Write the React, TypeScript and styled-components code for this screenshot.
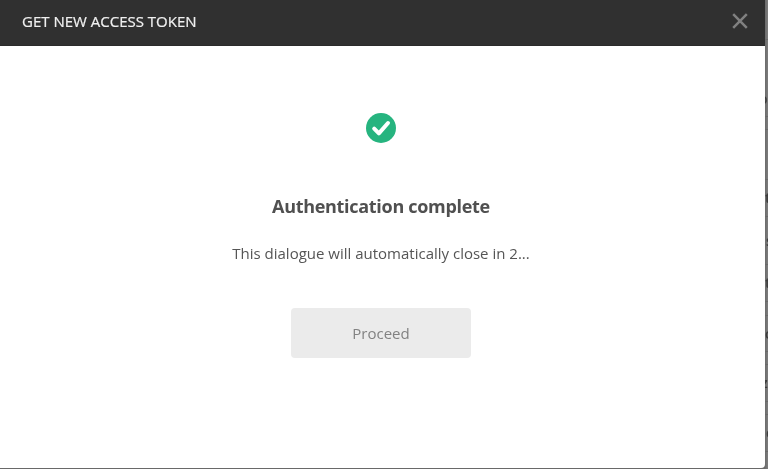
import styled, { createGlobalStyle } from "styled-components";

const GlobalStyle = createGlobalStyle`
  * { box-sizing: border-box; }
  html, body { margin: 0; padding: 0; overflow: hidden; }
  body { background: #6b6b6b; font-family: "Open Sans", "Noto Sans", sans-serif; }
`;

const Page = styled.div`
  display: flex;
  width: 768px;
  height: 469px;
  overflow: hidden;
  background: #696969;
`;

const Dialog = styled.section`
  display: flex;
  flex-direction: column;
  width: 765px;
  height: 468px;
  flex: none;
  background: #fff;
  border-radius: 0 0 4px 0;
  will-change: transform;
`;

const Header = styled.header`
  display: flex;
  align-items: center;
  justify-content: space-between;
  height: 46px;
  flex: none;
  padding: 0 17px 4px 22px;
  background: #303030;
  border-bottom: 1px solid #2b2b2b;
`;

const Title = styled.h1`
  margin: 0;
  font-size: 15px;
  line-height: 20px;
  font-weight: 400;
  color: #f0f0f0;
  -webkit-text-stroke: 0.2px #f0f0f0;
  white-space: nowrap;
`;

const CloseButton = styled.button`
  display: flex;
  padding: 0;
  border: 0;
  background: none;
  color: #808080;
`;

const Body = styled.main`
  display: flex;
  flex-direction: column;
  align-items: center;
  padding: 67px 3px 0 0;
`;

const StatusIcon = styled.svg`
  display: block;
  width: 30px;
  height: 30px;
`;

const Heading = styled.h2`
  margin: 51px 0 0;
  font-size: 18px;
  line-height: 24px;
  font-weight: 700;
  letter-spacing: -0.3px;
  color: #505050;
  white-space: nowrap;
`;

const Message = styled.p`
  margin: 25px 0 0;
  font-size: 15px;
  line-height: 20px;
  color: #555;
  white-space: nowrap;
`;

const ProceedButton = styled.button`
  width: 180px;
  height: 50px;
  margin-top: 45px;
  padding: 0;
  border: 0;
  border-radius: 4px;
  background: #ebebeb;
  color: #828282;
  font: 400 15px/20px "Open Sans", "Noto Sans", sans-serif;
`;

const Backdrop = styled.aside`
  width: 3px;
  height: 469px;
  flex: none;
  overflow: hidden;
  background: linear-gradient(90deg, #6c6c6c, #7d7d7d);
  will-change: transform;
`;

const BackdropRow = styled.div<{ $height: number; $shift: number; $line?: boolean }>`
  display: flex;
  align-items: center;
  height: ${(p) => p.$height}px;
  border-bottom: 1px solid ${(p) => (p.$line ? "#696969" : "transparent")};
  font-size: 14px;
  line-height: 16px;
  font-weight: 600;
  color: #3c3c3c;
  text-indent: ${(p) => p.$shift}px;
`;

const backdropRows = [
  { height: 40, text: "", shift: 0, line: true },
  { height: 41, text: "", shift: 0 },
  { height: 36, text: "o", shift: -6, line: true },
  { height: 13, text: "", shift: 0, line: true },
  { height: 50, text: "", shift: 0, line: true },
  { height: 37, text: "t", shift: 0, line: true },
  { height: 48, text: "s", shift: 1, line: true },
  { height: 37, text: "t", shift: 0, line: true },
  { height: 14, text: "", shift: 0, line: true },
  { height: 36, text: "c", shift: 0, line: true },
  { height: 13, text: "", shift: 0, line: true },
  { height: 37, text: "z", shift: -4, line: true },
  { height: 13, text: "", shift: 0, line: true },
  { height: 37, text: "e", shift: 1, line: true },
];

export default function App() {
  return (
    <Page>
      <GlobalStyle />
      <Dialog role="dialog" aria-label="Get new access token">
        <Header>
          <Title>GET NEW ACCESS TOKEN</Title>
          <CloseButton aria-label="Close">
            <svg width="16" height="16" viewBox="0 0 16 16">
              <path d="M1.2 1.2 14.8 14.8M14.8 1.2 1.2 14.8" stroke="currentColor" strokeWidth="2.5" />
            </svg>
          </CloseButton>
        </Header>
        <Body>
          <StatusIcon viewBox="0 0 30 30">
            <circle cx="15" cy="15" r="15" fill="#26b47f" />
            <path
              d="M8.2 15.6 12.9 20.4 22 10"
              fill="none"
              stroke="#fff"
              strokeWidth="4"
              strokeLinecap="round"
              strokeLinejoin="round"
            />
          </StatusIcon>
          <Heading>Authentication complete</Heading>
          <Message>This dialogue will automatically close in 2...</Message>
          <ProceedButton>Proceed</ProceedButton>
        </Body>
      </Dialog>
      <Backdrop aria-hidden="true">
        {backdropRows.map((row, i) => (
          <BackdropRow key={i} $height={row.height} $shift={row.shift} $line={row.line}>
            {row.text}
          </BackdropRow>
        ))}
      </Backdrop>
    </Page>
  );
}
